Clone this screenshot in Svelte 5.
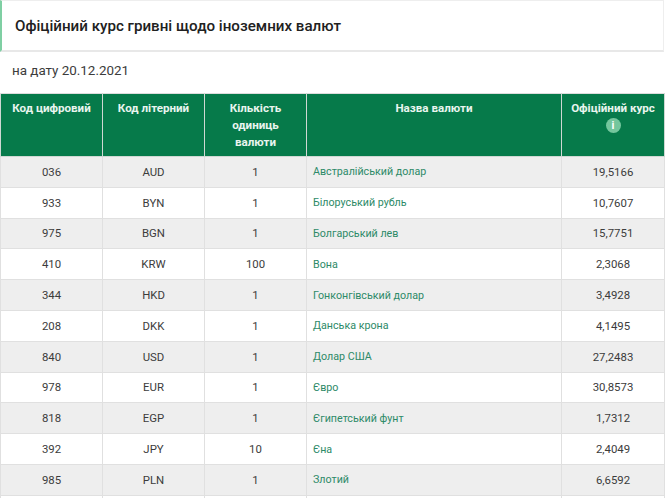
<script>
  const rows = [
    ["036", "AUD", "1", "Австралійський долар", "19,5166"],
    ["933", "BYN", "1", "Білоруський рубль", "10,7607"],
    ["975", "BGN", "1", "Болгарський лев", "15,7751"],
    ["410", "KRW", "100", "Вона", "2,3068"],
    ["344", "HKD", "1", "Гонконгівський долар", "3,4928"],
    ["208", "DKK", "1", "Данська крона", "4,1495"],
    ["840", "USD", "1", "Долар США", "27,2483"],
    ["978", "EUR", "1", "Євро", "30,8573"],
    ["818", "EGP", "1", "Єгипетський фунт", "1,7312"],
    ["392", "JPY", "10", "Єна", "2,4049"],
    ["985", "PLN", "1", "Злотий", "6,6592"],
    ["", "", "", "", ""]
  ];
</script>

<div class="page">
  <div class="title"><h1>Офіційний курс гривні щодо іноземних валют</h1></div>
  <p class="date">на дату 20.12.2021</p>
  <table>
    <colgroup>
      <col class="c1" />
      <col class="c2" />
      <col class="c3" />
      <col class="c4" />
      <col class="c5" />
    </colgroup>
    <thead>
      <tr>
        <th class="wide">Код цифровий</th>
        <th>Код літерний</th>
        <th>Кількість одиниць валюти</th>
        <th>Назва валюти</th>
        <th class="wide">Офіційний курс <span class="info">i</span></th>
      </tr>
    </thead>
    <tbody>
      {#each rows as r}
        <tr>
          <td>{r[0]}</td>
          <td>{r[1]}</td>
          <td>{r[2]}</td>
          <td class="name"><a href="#top">{r[3]}</a></td>
          <td>{r[4]}</td>
        </tr>
      {/each}
    </tbody>
  </table>
</div>

<style>
  :global(body) {
    background: #fff;
    overflow: hidden;
  }
  .page {
    width: 665px;
    height: 498px;
    overflow: hidden;
    font-family: Roboto, "Liberation Sans", sans-serif;
    color: #3c3c3c;
  }
  .title {
    box-sizing: border-box;
    width: 664px;
    height: 52px;
    border-top: 1px solid #eee;
    border-left: 2px solid #7fcfa3;
    border-bottom: 2px solid #e8e8e8;
    border-right: 1px solid #eee;
    padding-left: 13px;
    display: flex;
    align-items: center;
  }
  h1 {
    margin: 0;
    font-size: 15.15px;
    font-weight: 500;
    color: #212121;
  }
  .date {
    margin: 0;
    height: 41px;
    padding-left: 12px;
    font-size: 13.4px;
    line-height: 38px;
    color: #3c3c3c;
  }
  table {
    width: 664px;
    table-layout: fixed;
    border-collapse: collapse;
    font-size: 11.4px;
  }
  .c1 { width: 102px; }
  .c2 { width: 102px; }
  .c3 { width: 102px; }
  .c4 { width: 255px; }
  .c5 { width: 103px; }
  th {
    height: 63px;
    box-sizing: border-box;
    background: #067a4a;
    color: #e9f5ef;
    font-size: 11.6px;
    font-weight: 700;
    line-height: 17px;
    vertical-align: top;
    text-align: center;
    padding: 6px 10px 0;
    border: 1px solid #cfd8d3;
    border-top-color: #ddd;
  }
  th.wide {
    padding-left: 2px;
    padding-right: 2px;
  }
  .info {
    display: block;
    width: 15px;
    height: 15px;
    margin: 1px auto 0;
    border-radius: 50%;
    background: #74c69d;
    color: #fff;
    font-size: 11px;
    line-height: 15px;
  }
  td {
    height: 30.8px;
    box-sizing: border-box;
    padding: 0 6px;
    text-align: center;
    border: 1px solid #e0e0e0;
  }
  tbody tr:nth-child(odd) td {
    background: #eee;
  }
  td.name {
    text-align: left;
    font-size: 10.7px;
  }
  a {
    color: #2d8a68;
    text-decoration: none;
  }
</style>
